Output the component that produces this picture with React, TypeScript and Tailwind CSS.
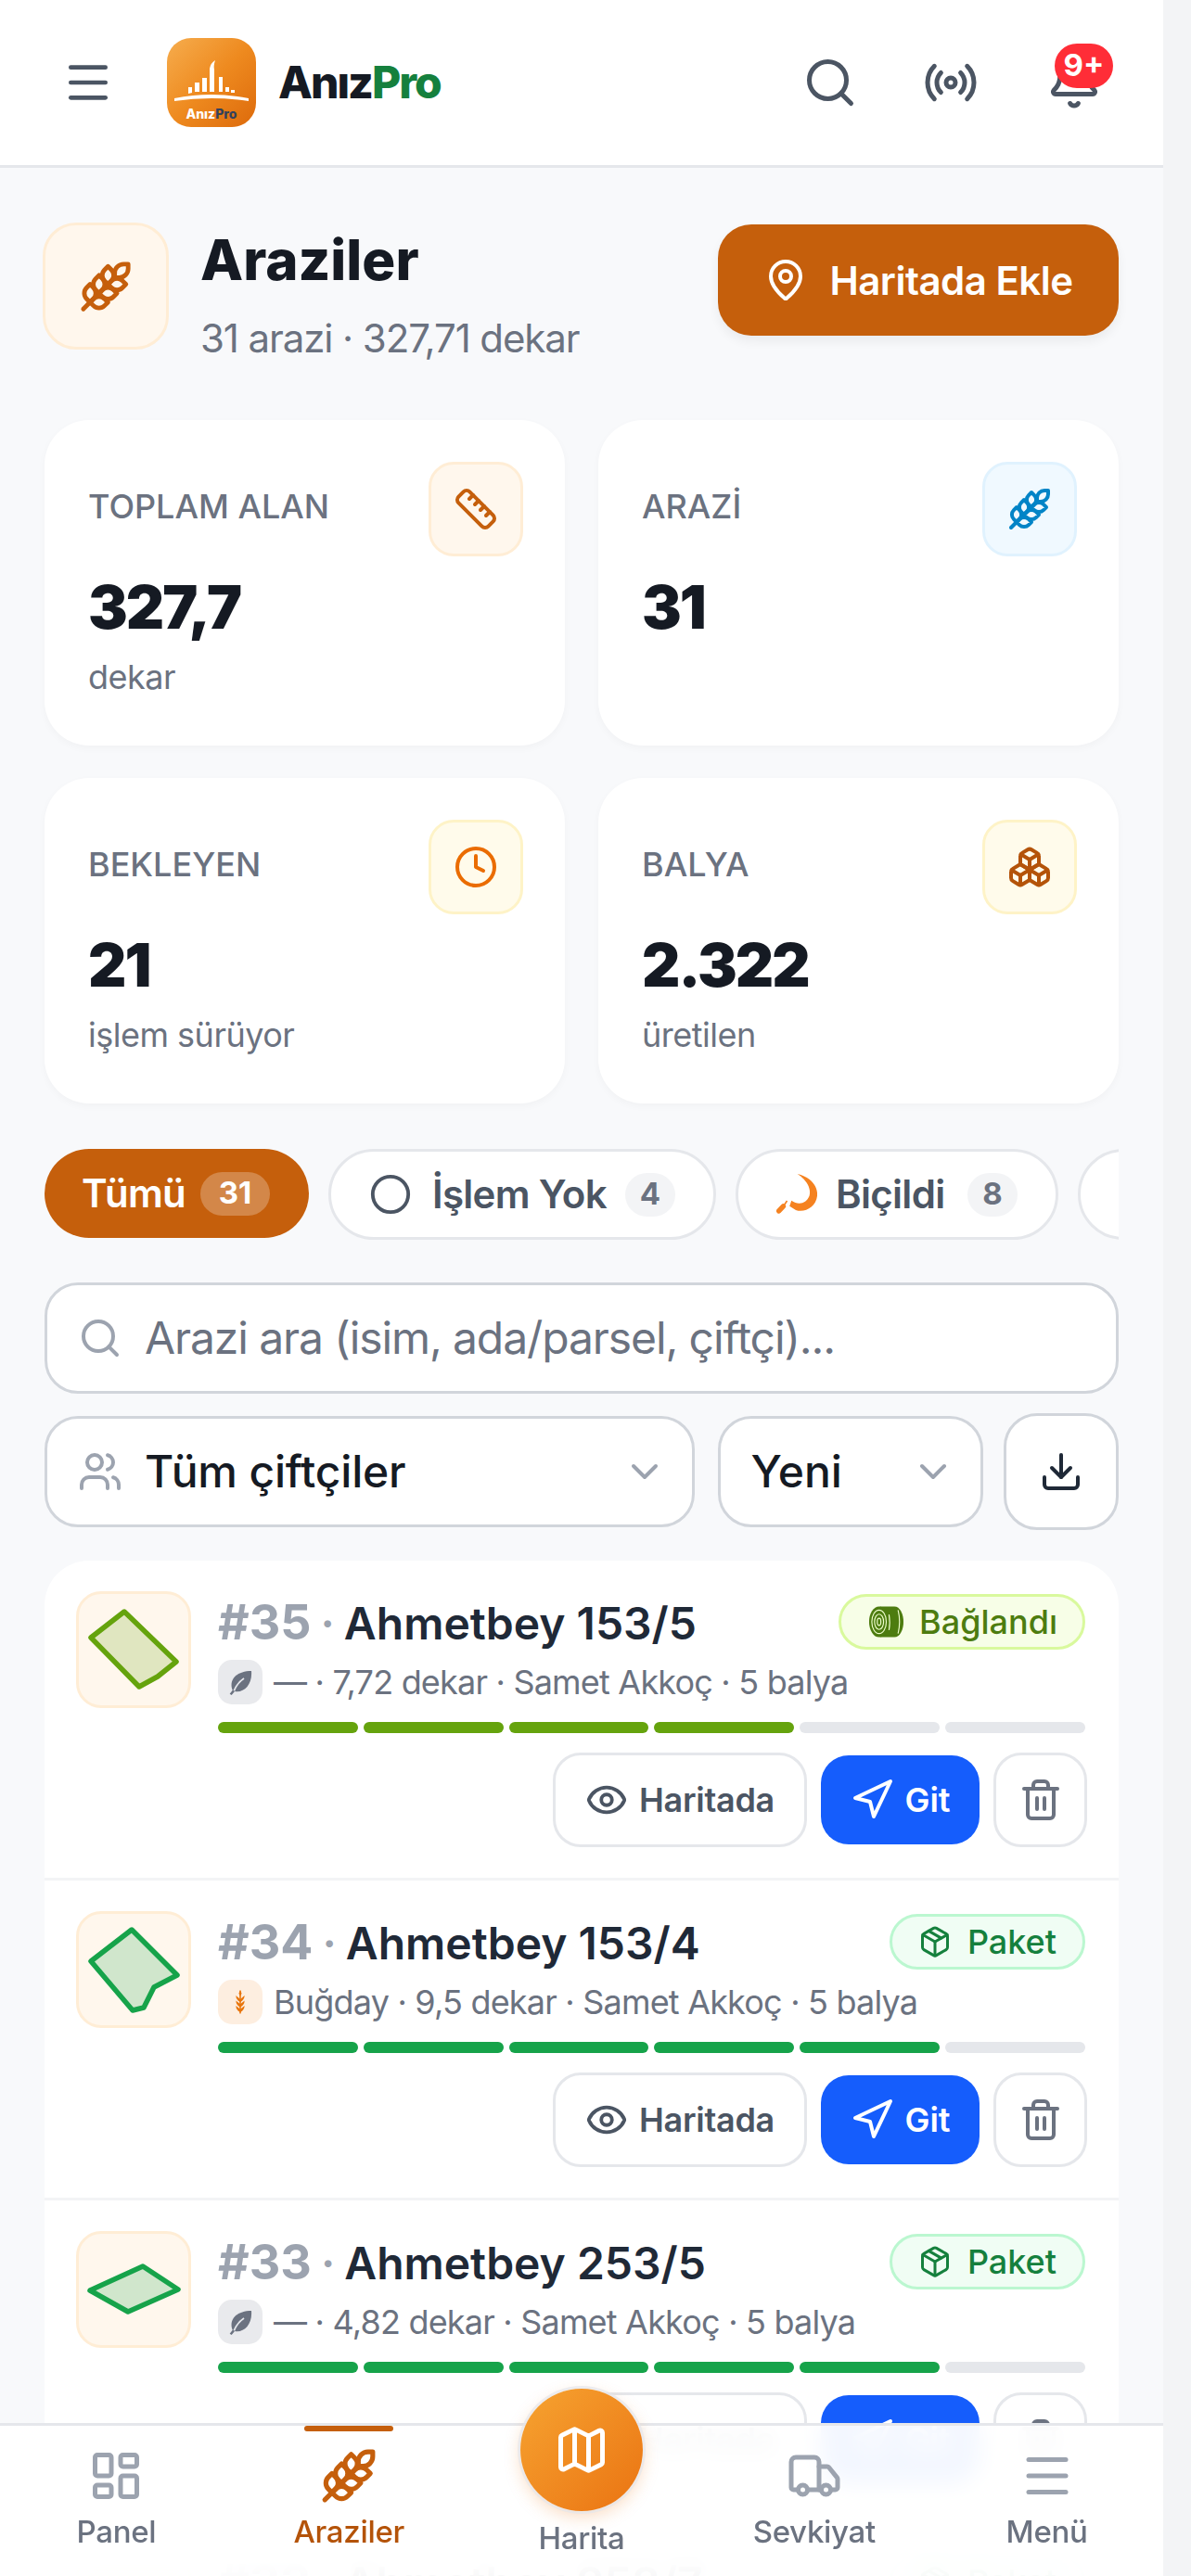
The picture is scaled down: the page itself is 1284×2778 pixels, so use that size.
import React from 'react';
import {
  Menu, Search, Radio, Bell, Wheat, MapPin, Ruler, Clock, Boxes, Circle, Users,
  ChevronDown, Download, Eye, Navigation, Trash2, Package, LayoutDashboard, Map, Truck,
} from 'lucide-react';

const font = { fontFamily: 'Inter, "Noto Sans", sans-serif' };

function Logo() {
  return (
    <svg width="96" height="96" viewBox="0 0 96 96" className="shrink-0">
      <defs>
        <linearGradient id="logoBg" x1="0" y1="0" x2="1" y2="1">
          <stop offset="0" stopColor="#f6ad4e" />
          <stop offset="0.5" stopColor="#ee8a1f" />
          <stop offset="1" stopColor="#dd6a0b" />
        </linearGradient>
      </defs>
      <rect width="96" height="96" rx="26" fill="url(#logoBg)" />
      <path d="M8 65 Q48 57 88 65 L88 68 Q48 62 8 68Z" fill="#fff" />
      <path d="M23 60v-7h4v6zM30 58V48h5v10zM38 58V43h5v15zM46 58V33q1-6 6-9-2 6-1 10v24zM56 58V42h4v16zM63 58v-5h4v5zM69 59v-3h4v3z" fill="#fff" />
      <text x="48" y="87" textAnchor="middle" fontFamily="Inter" fontWeight="800" fontSize="14" fill="#fff">
        Anız<tspan fill="#33415c">Pro</tspan>
      </text>
    </svg>
  );
}

function Sickle({ className }: { className?: string }) {
  return (
    <svg viewBox="0 0 130 130" className={className} fill="#f58220">
      <path d="M67 0C110 10 133 40 130 70 126 105 90 125 62 115L42 103 48 85C70 100 95 95 105 70 112 45 95 18 67 0Z" />
      <path d="M32 84l4 3-10 15-4-3zM8 118l14-15" />
      <path d="M8 118 22 103" stroke="#f58220" strokeWidth="16" strokeLinecap="round" />
    </svg>
  );
}

function Bale({ className }: { className?: string }) {
  return (
    <svg viewBox="0 0 40 36" className={className} fill="none">
      <path d="M13 1h16c6 0 10 8 10 17s-4 17-10 17H13z" fill="#4d7c0f" />
      <ellipse cx="12" cy="18" rx="11" ry="17" fill="#4d7c0f" />
      <ellipse cx="12" cy="18" rx="8" ry="13" stroke="#ecfccb" strokeWidth="1.2" />
      <ellipse cx="12" cy="18" rx="5" ry="8.5" stroke="#ecfccb" strokeWidth="1.2" />
      <ellipse cx="12" cy="18" rx="2" ry="4" stroke="#ecfccb" strokeWidth="1.2" />
      <path d="M23 10c1 6 1 12 0 17M33 5c2 8 2 18 0 26" stroke="#ecfccb" strokeWidth="1.2" />
    </svg>
  );
}

function GrainIcon() {
  return (
    <svg viewBox="0 0 20 36" className="h-[28px] w-[16px]" fill="#e8750c">
      <rect x="9" y="2" width="2" height="32" />
      <path d="M10 14 4 9q0 6 6 9zM10 14l6-5q0 6-6 9zM10 21l-6-5q0 6 6 9zM10 21l6-5q0 6-6 9zM10 28l-6-5q0 6 6 9zM10 28l6-5q0 6-6 9z" />
      <path d="M10 2 8 6l2 4 2-4z" />
    </svg>
  );
}

function LeafIcon() {
  return (
    <svg viewBox="0 0 24 24" className="h-[32px] w-[32px]">
      <path d="M21 3C11 3 4 8 5 16c.1 1 .4 1.800.8 2.600L3.500 21.500 5 22.500 7.500 19.500C15 21 22 14 21 3z" fill="#6b7280" />
      <path d="M7 19C9 14 12 11 15 9" stroke="#e5e7eb" strokeWidth="1.400" fill="none" />
    </svg>
  );
}

function StatCard({ label, value, sub, icon, box }: { label: string; value: string; sub?: string; icon: React.ReactNode; box: string }) {
  return (
    <div className="h-[351px] rounded-[48px] bg-white pl-[47px] pr-[45px] pt-[45px] shadow-[0_3px_9px_rgba(0,0,0,0.03)]">
      <div className="flex items-start justify-between">
        <div className="mt-[21px] text-[36px] leading-[54px] font-medium text-[#6b7280]">{label}</div>
        <div className={`flex h-[102px] w-[102px] items-center justify-center rounded-[27px] border-[3px] ${box}`}>{icon}</div>
      </div>
      <div className="mt-[19px] text-[64px] leading-[72px] font-black tracking-[-2px] text-[#151a23]">{value}</div>
      {sub && <div className="mt-[15px] text-[36px] leading-[48px] tracking-[-0.5px] text-[#6b7280]">{sub}</div>}
    </div>
  );
}

function Chip({ active, icon, label, count, width }: { active?: boolean; icon?: React.ReactNode; label: string; count: string; width: string }) {
  return (
    <div className={`flex shrink-0 items-center rounded-full ${width} ${active ? 'h-[96px] bg-[#c55f0c] pl-[40px] pr-[42px] text-white' : 'h-[98px] border-[3px] border-[#e5e7eb] bg-white pl-[41px] pr-[41px] text-[#4b5563]'}`}>
      {icon}
      <span className="text-[42px] leading-none font-semibold tracking-[-0.7px]">{label}</span>
      <span className={`ml-auto flex h-[47px] items-center justify-center rounded-full text-[33px] font-bold ${active ? 'w-[75px] bg-white/25 text-white' : 'w-[54px] bg-[#f3f4f6] text-[#6b7280]'}`}>{count}</span>
    </div>
  );
}

type Row = {
  no: string;
  name: string;
  crop: string;
  grain?: boolean;
  rest: string;
  done: number;
  color: string;
  badge: 'bag' | 'paket';
  shape: string;
};

const rows: Row[] = [
  { no: '#35', name: 'Ahmetbey 153/5', crop: '—', rest: '7,72 dekar · Samet Akkoç · 5 balya', done: 4, color: '#65a30d', badge: 'bag', shape: '52,22 108,76 88,92 68,103 16,50' },
  { no: '#34', name: 'Ahmetbey 153/4', crop: 'Buğday', grain: true, rest: '9,5 dekar · Samet Akkoç · 5 balya', done: 5, color: '#16a34a', badge: 'paket', shape: '60,20 109,69 84,82 73,104 61,107 16,54' },
  { no: '#33', name: 'Ahmetbey 253/5', crop: '—', rest: '4,82 dekar · Samet Akkoç · 5 balya', done: 5, color: '#16a34a', badge: 'paket', shape: '72,38 110,63 56,87 15,64' },
  { no: '#32', name: 'Ahmetbey 253/7', crop: '—', rest: '4,82 dekar · Samet Akkoç · 5 balya', done: 5, color: '#16a34a', badge: 'paket', shape: '72,38 110,63 56,87 15,64' },
];

function ParcelRow({ row, last }: { row: Row; last?: boolean }) {
  return (
    <div className={`flex h-[345px] gap-[29px] pl-[34px] pr-[36px] pt-[33px] ${last ? '' : 'border-b-[3px] border-[#f3f4f6]'}`}>
      <div className="flex h-[126px] w-[124px] shrink-0 items-center justify-center rounded-[27px] border-[3px] border-[#ffedd5] bg-[#fff7ed]">
        <svg viewBox="0 0 124 126" className="h-[126px] w-[124px] shrink-0">
          <polygon points={row.shape} fill={row.color} fillOpacity="0.2" stroke={row.color} strokeWidth="5.500" strokeLinejoin="round" />
        </svg>
      </div>
      <div className="min-w-0 flex-1">
        <div className="flex h-[68px] items-start justify-between">
          <div className="mt-[5px] flex items-baseline text-[48px] leading-[58px] font-semibold text-[#1f2937]">
            <span className="text-[52px] font-bold text-[#9ca3af]">{row.no}</span>
            <span className="mx-[10px] text-[#9ca3af]">·</span>
            {row.name}
          </div>
          {row.badge === 'bag' ? (
            <div className="mt-[3px] flex h-[60px] items-center gap-[16px] rounded-full border-[3px] border-[#d9f99d] bg-[#f7fee7] pl-[29px] pr-[27px] text-[36px] font-medium text-[#4d7c0f]">
              <Bale className="h-[36px] w-[39px]" />
              Bağlandı
            </div>
          ) : (
            <div className="mt-[3px] flex h-[60px] items-center gap-[17px] rounded-full border-[3px] border-[#bbf7d0] bg-[#f0fdf4] pl-[28px] pr-[28px] text-[36px] font-medium text-[#15803d]">
              <Package className="h-[36px] w-[36px]" strokeWidth={2} />
              Paket
            </div>
          )}
        </div>
        <div className="mt-[6px] flex h-[48px] items-center gap-[12px] text-[36px] tracking-[-0.8px] text-[#6b7280]">
          <span className={`flex h-[48px] w-[48px] items-center justify-center rounded-[15px] ${row.grain ? 'bg-[#fdeee0]' : 'bg-[#e9eaed]'}`}>
            {row.grain ? <GrainIcon /> : <LeafIcon />}
          </span>
          <span>{row.crop} · {row.rest}</span>
        </div>
        <div className="mt-[19px] flex gap-[6px]">
          {[0, 1, 2, 3, 4, 5].map((i) => (
            <div key={i} className="h-[12px] flex-1 rounded-full bg-[#e5e7eb]" style={i < row.done ? { backgroundColor: row.color } : undefined} />
          ))}
        </div>
        <div className="-mr-[2px] mt-[21px] flex justify-end gap-[15px]">
          <div className="flex h-[102px] w-[274px] items-center justify-center gap-[12px] rounded-[30px] border-[3px] border-[#e5e7eb] bg-white text-[36px] font-semibold tracking-[-0.3px] text-[#4b5563]">
            <Eye className="h-[46px] w-[46px]" strokeWidth={2} />
            Haritada
          </div>
          <div className="mt-[3px] flex h-[96px] w-[171px] items-center justify-center gap-[11px] rounded-[30px] bg-[#155dfc] text-[36px] font-semibold text-white">
            <Navigation className="h-[48px] w-[48px]" strokeWidth={2} />
            Git
          </div>
          <div className="flex h-[102px] w-[101px] items-center justify-center rounded-[30px] border-[3px] border-[#e5e7eb] bg-white text-[#6b7280]">
            <Trash2 className="h-[48px] w-[48px]" strokeWidth={2} />
          </div>
        </div>
      </div>
    </div>
  );
}

function NavItem({ label, icon, active }: { label: string; icon: React.ReactNode; active?: boolean }) {
  return (
    <div className={`relative flex w-[251px] flex-col items-center pt-[21px] ${active ? 'text-[#b45309]' : 'text-[#6b7280]'}`}>
      {active && <div className="absolute left-1/2 top-0 h-[6px] w-[96px] -translate-x-1/2 rounded-full bg-[#c55f0c]" />}
      <div className="flex h-[66px] items-center justify-center">{icon}</div>
      <div className="mt-[6px] text-[33px] leading-[42px] font-medium tracking-[-0.3px]">{label}</div>
    </div>
  );
}

export default function App() {
  return (
    <div className="relative flex h-[2778px] w-[1284px] overflow-hidden bg-[#f3f4f6]" style={font}>
      <div className="w-[1254px] shrink-0 bg-[#f8f9fb]">
        {/* top bar */}
        <header className="flex h-[181px] items-center border-b-[3px] border-[#e5e7eb] bg-white pl-[67px] pr-[66px]">
          <Menu className="h-[56px] w-[56px] text-[#4b5563]" strokeWidth={2} />
          <div className="ml-[57px]"><Logo /></div>
          <span className="ml-[24px] text-[48px] font-extrabold tracking-[-2px] text-[#151a23]">
            Anız<span className="text-[#15803d]">Pro</span>
          </span>
          <div className="ml-auto flex items-center">
            <Search className="h-[60px] w-[60px] text-[#4b5563]" strokeWidth={2} />
            <Radio className="ml-[70px] h-[60px] w-[60px] text-[#4b5563]" strokeWidth={2} />
            <div className="relative ml-[73px] h-[60px] w-[60px]">
              <Bell className="h-[60px] w-[60px] text-[#4b5563]" strokeWidth={2} />
              <span className="absolute -right-[12px] -top-[12px] flex h-[48px] w-[63px] items-center justify-center rounded-full bg-[#ff2d37] text-[33px] font-bold text-white">9+</span>
            </div>
          </div>
        </header>

        <main className="px-[48px]">
          {/* page title */}
          <div className="flex pt-[59px]">
            <div className="-ml-[2px] flex h-[137px] w-[136px] items-center justify-center rounded-[36px] border-[3px] border-[#ffedd5] bg-[#fff7ed]">
              <Wheat className="h-[58px] w-[58px] text-[#c55f0c]" strokeWidth={2} />
            </div>
            <div className="ml-[34px] h-[137px]">
              <h1 className="mt-[4px] text-[60px] leading-[72px] font-extrabold text-[#151a23]">Araziler</h1>
              <p className="mt-[22px] text-[42px] leading-[54px] tracking-[-1.1px] text-[#6b7280]">31 arazi · 327,71 dekar</p>
            </div>
            <div className="ml-auto mt-[2px] flex h-[120px] w-[432px] items-center justify-center gap-[23px] rounded-[36px] bg-[#c55f0c] text-[42px] font-semibold tracking-[-0.5px] text-white shadow-[0_6px_12px_rgba(0,0,0,0.06)]">
              <MapPin className="h-[48px] w-[48px]" strokeWidth={2} />
              Haritada Ekle
            </div>
          </div>

          {/* stats */}
          <div className="mt-[76px] grid grid-cols-2 gap-x-[36px] gap-y-[35px]">
            <StatCard label="TOPLAM ALAN" value="327,7" sub="dekar" box="border-[#ffedd5] bg-[#fff7ed]" icon={<Ruler className="h-[48px] w-[48px] text-[#c55f0c]" strokeWidth={2} />} />
            <StatCard label="ARAZİ" value="31" box="border-[#e0f2fe] bg-[#f0f9ff]" icon={<Wheat className="h-[48px] w-[48px] text-[#0284c7]" strokeWidth={2} />} />
            <StatCard label="BEKLEYEN" value="21" sub="işlem sürüyor" box="border-[#fef3c7] bg-[#fffbeb]" icon={<Clock className="h-[48px] w-[48px] text-[#ea6c00]" strokeWidth={2} />} />
            <StatCard label="BALYA" value="2.322" sub="üretilen" box="border-[#fef3c7] bg-[#fffbeb]" icon={<Boxes className="h-[48px] w-[48px] text-[#b45309]" strokeWidth={2} />} />
          </div>

          {/* filter chips */}
          <div className="mt-[49px] flex items-start gap-[21px] overflow-hidden">
            <Chip active width="w-[285px]" label="Tümü" count="31" />
            <Chip width="w-[418px]" icon={<Circle className="mr-[22px] h-[46px] w-[46px]" strokeWidth={2} />} label="İşlem Yok" count="4" />
            <Chip width="w-[348px]" icon={<Sickle className="mr-[20px] h-[44px] w-[44px]" />} label="Biçildi" count="8" />
            <div className="h-[98px] w-[120px] shrink-0 rounded-full border-[3px] border-[#e5e7eb] bg-white" />
          </div>

          {/* search */}
          <div className="mt-[46px] flex h-[120px] items-center rounded-[36px] border-[3px] border-[#d1d5db] bg-white pl-[33px]">
            <Search className="h-[48px] w-[48px] text-[#9ca3af]" strokeWidth={2} />
            <span className="ml-[24px] text-[48px] tracking-[-1.1px] text-[#6b7280]">Arazi ara (isim, ada/parsel, çiftçi)...</span>
          </div>

          {/* selects */}
          <div className="mt-[21px] flex items-center">
            <div className="flex h-[120px] w-[702px] items-center rounded-[36px] border-[3px] border-[#d1d5db] bg-white pl-[33px] pr-[27px]">
              <Users className="h-[48px] w-[48px] text-[#9ca3af]" strokeWidth={2} />
              <span className="ml-[24px] text-[48px] font-medium tracking-[-0.2px] text-[#151a23]">Tüm çiftçiler</span>
              <ChevronDown className="ml-auto h-[48px] w-[48px] text-[#9ca3af]" strokeWidth={2} />
            </div>
            <div className="ml-[25px] flex h-[120px] w-[287px] items-center rounded-[36px] border-[3px] border-[#d1d5db] bg-white pl-[33px] pr-[27px]">
              <span className="text-[48px] font-medium text-[#151a23]">Yeni</span>
              <ChevronDown className="ml-auto h-[48px] w-[48px] text-[#9ca3af]" strokeWidth={2} />
            </div>
            <div className="ml-[22px] flex h-[126px] w-[124px] shrink-0 items-center justify-center rounded-[36px] border-[3px] border-[#d1d5db] bg-white text-[#1f2937]">
              <Download className="h-[48px] w-[48px]" strokeWidth={2} />
            </div>
          </div>

          {/* parcel list */}
          <div className="mt-[33px] overflow-hidden rounded-[48px] bg-white">
            {rows.map((r, i) => <ParcelRow key={r.no} row={r} last={i === rows.length - 1} />)}
          </div>
        </main>
      </div>

      {/* bottom nav over the list */}
      <nav className="absolute bottom-0 left-0 flex h-[165px] w-[1254px] border-t-[3px] border-[#e5e7eb] bg-white/95 backdrop-blur-md">
        <NavItem label="Panel" icon={<LayoutDashboard className="h-[60px] w-[60px] text-[#9ca3af]" strokeWidth={2} />} />
        <NavItem active label="Araziler" icon={<Wheat className="h-[62px] w-[62px] text-[#c55f0c]" strokeWidth={2} />} />
        <div className="relative w-[251px] text-center">
          <div className="absolute left-1/2 -top-[40px] flex h-[132px] w-[132px] -translate-x-1/2 items-center justify-center rounded-full bg-gradient-to-br from-[#f6a330] to-[#ea7310] shadow-[0_6px_18px_rgba(234,115,16,0.25)] ring-[3px] ring-[#e5e7eb]/70">
            <Map className="h-[60px] w-[60px] text-white" strokeWidth={2} />
          </div>
          <div className="absolute inset-x-0 top-[100px] text-[33px] leading-[42px] font-medium tracking-[-0.3px] text-[#6b7280]">Harita</div>
        </div>
        <NavItem label="Sevkiyat" icon={<Truck className="h-[60px] w-[60px] text-[#9ca3af]" strokeWidth={2} />} />
        <NavItem label="Menü" icon={<Menu className="h-[60px] w-[60px] text-[#9ca3af]" strokeWidth={2} />} />
      </nav>
    </div>
  );
}
